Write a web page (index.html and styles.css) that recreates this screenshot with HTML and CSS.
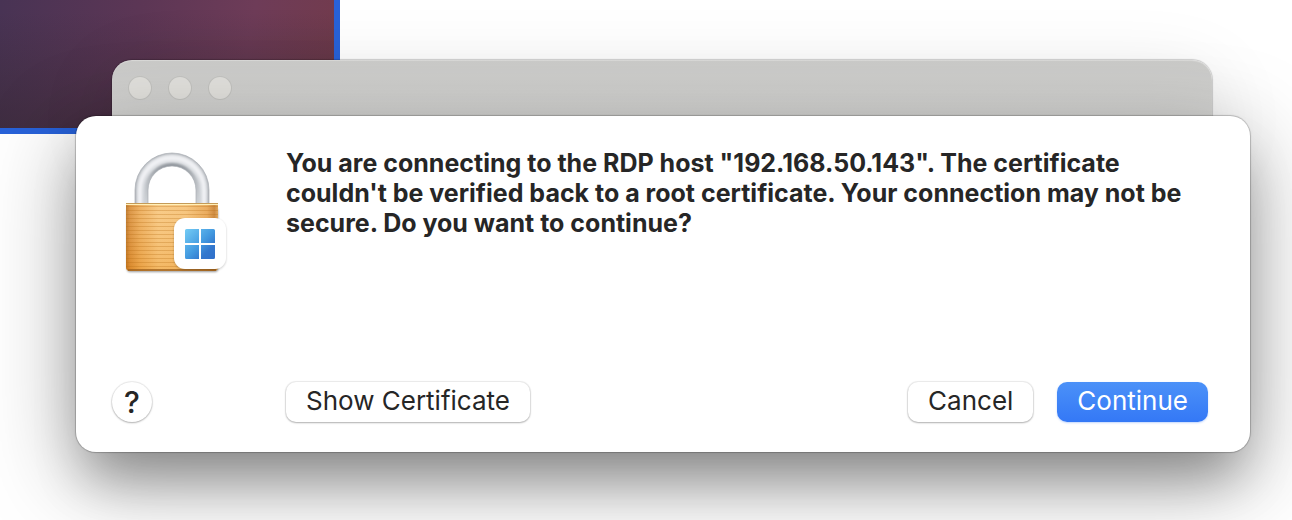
FILE: index.html
```html
<!DOCTYPE html>
<html lang="en">
<head>
<meta charset="utf-8">
<meta name="viewport" content="width=device-width, initial-scale=1">
<title>Certificate warning</title>
<link rel="stylesheet" href="styles.css">
</head>
<body>
<div class="wallpaper"></div>
<main class="desktop">
  <div class="titlebar">
    <span class="light"></span>
    <span class="light"></span>
    <span class="light"></span>
  </div>
  <section class="dialog" role="alertdialog" aria-labelledby="message">
    <div class="content">
      <svg class="lock" width="120" height="130" viewBox="0 0 120 130" aria-hidden="true">
        <defs>
          <linearGradient id="brass" x1="0" y1="0" x2="1" y2="0">
            <stop offset="0" stop-color="#b86f20"/>
            <stop offset=".04" stop-color="#d88c36"/>
            <stop offset=".15" stop-color="#ecaa55"/>
            <stop offset=".35" stop-color="#f8c67c"/>
            <stop offset=".65" stop-color="#f6c174"/>
            <stop offset=".88" stop-color="#e8a450"/>
            <stop offset=".96" stop-color="#c87f30"/>
            <stop offset="1" stop-color="#dca050"/>
          </linearGradient>
          <linearGradient id="shade" x1="0" y1="0" x2="0" y2="1">
            <stop offset="0" stop-color="#fff" stop-opacity=".1"/>
            <stop offset="1" stop-color="#e07c00" stop-opacity=".2"/>
          </linearGradient>
          <pattern id="brush" width="8" height="4" patternUnits="userSpaceOnUse">
            <rect y="2" width="8" height="1" fill="#b86e14" opacity=".3"/>
          </pattern>
          <linearGradient id="steel" x1="0" y1="0" x2="0" y2="1">
            <stop offset="0" stop-color="#e3e5e8"/>
            <stop offset=".5" stop-color="#d6d9dd"/>
            <stop offset="1" stop-color="#d2d5da"/>
          </linearGradient>
          <linearGradient id="inner" gradientUnits="userSpaceOnUse" x1="0" y1="15" x2="0" y2="55">
            <stop offset="0" stop-color="#8c9299"/>
            <stop offset=".4" stop-color="#b4b8bd"/>
            <stop offset="1" stop-color="#ccd0d4"/>
          </linearGradient>
          <linearGradient id="pane" gradientUnits="userSpaceOnUse" x1="69" y1="81" x2="99" y2="111">
            <stop offset="0" stop-color="#74ccf5"/>
            <stop offset=".5" stop-color="#439ae0"/>
            <stop offset=".75" stop-color="#3377cd"/>
            <stop offset="1" stop-color="#306fca"/>
          </linearGradient>
          <filter id="soft" x="-20%" y="-20%" width="140%" height="140%"><feGaussianBlur stdDeviation="1"/></filter>
          <clipPath id="shackle"><path d="M19 55V42a37 37 0 0 1 74 0v13H80V42a24 24 0 0 0-48 0v13z"/></clipPath>
        </defs>
        <rect x="11" y="60" width="91" height="64" rx="3" fill="#000" opacity=".4" filter="url(#soft)"/>
        <g clip-path="url(#shackle)">
          <path d="M19 60V42a37 37 0 0 1 74 0v18H80V42a24 24 0 0 0-48 0v18z" fill="url(#steel)"/>
          <g fill="none" filter="url(#soft)">
            <path d="M32 60V42a24 24 0 0 1 48 0v18" stroke="url(#inner)" stroke-width="6"/>
            <path d="M24 60V42a32 32 0 0 1 64 0v18" stroke="#f0f1f4" stroke-width="4"/>
            <path d="M19 60V42a37 37 0 0 1 74 0v18" stroke="#a4a8ae" stroke-width="2"/>
          </g>
        </g>
        <path d="M19 55V42a37 37 0 0 1 74 0v13M80 55V42a24 24 0 0 0-48 0v13" fill="none" stroke="#a9adb3" stroke-width=".7"/>
        <path d="M10 55h92v64a4 4 0 0 1-4 4H14a4 4 0 0 1-4-4z" fill="url(#brass)"/>
        <path d="M10 55h92v64a4 4 0 0 1-4 4H14a4 4 0 0 1-4-4z" fill="url(#shade)"/>
        <rect x="10" y="57" width="92" height="64" fill="url(#brush)"/>
        <path d="M10 55.5h92" stroke="#c59b58"/>
        <path d="M10 56.5h92" stroke="#fff0b8"/>
        <path d="M12 122h88" stroke="#9d601e" stroke-width="1.5"/>
        <rect x="58" y="71" width="52" height="51" rx="11" fill="#000" opacity=".2" filter="url(#soft)"/>
        <rect x="58" y="70" width="52" height="51" rx="11" fill="#fff"/>
        <path d="M70.500 81H83v14H69V82.500a1.500 1.500 0 0 1 1.500-1.500zM85 81h12.500a1.500 1.500 0 0 1 1.500 1.500V95H85zM69 97h14v14H70.500a1.500 1.500 0 0 1-1.500-1.500zM85 97h14v12.500a1.500 1.500 0 0 1-1.500 1.500H85z" fill="url(#pane)"/>
      </svg>
      <p class="message" id="message">You are connecting to the RDP host "192.168.50.143". The certificate couldn't be verified back to a root certificate. Your connection may not be secure. Do you want to continue?</p>
    </div>
    <div class="actions">
      <button class="button help" type="button" aria-label="Help">?</button>
      <button class="button" type="button">Show Certificate</button>
      <span class="spacer"></span>
      <button class="button" type="button">Cancel</button>
      <button class="button primary" type="button">Continue</button>
    </div>
  </section>
</main>
</body>
</html>
```
FILE: styles.css
```css
* {
  box-sizing: border-box;
}

body {
  margin: 0;
  background: #fff;
  color: #262626;
  font-family: Inter, "Liberation Sans", sans-serif;
  overflow: hidden;
}

.wallpaper {
  position: absolute;
  top: 0;
  left: 0;
  width: 340px;
  height: 134px;
  border: solid #2862d9;
  border-width: 0 6px 6px 0;
  background:
    linear-gradient(to bottom, rgba(50, 38, 45, 0) 10%, rgba(50, 38, 45, 0.5) 100%),
    linear-gradient(100deg, #483354 0%, #5c3655 40%, #6e3c58 72%, #733b4c 100%);
}

.desktop {
  position: relative;
  padding: 60px 42px 68px 76px;
}

.titlebar {
  display: flex;
  gap: 18px;
  height: 76px;
  margin: 0 38px -20px 36px;
  padding: 17px;
  border-radius: 20px 20px 0 0;
  background: linear-gradient(#cbcbc9, #d4d4d2 56px);
  box-shadow:
    0 0 1px 1px rgba(0, 0, 0, 0.18),
    inset 0 1px 1px rgba(255, 255, 255, 0.3),
    0 20px 80px rgba(0, 0, 0, 0.12);
}

.light {
  width: 22px;
  height: 22px;
  border-radius: 50%;
  background: #e2e1dd;
  box-shadow: 0 0 0 1px #c3c3c0;
}

.dialog {
  position: relative;
  padding: 32px 42px 30px 36px;
  border-radius: 20px;
  background: #fff;
  box-shadow:
    0 0 1px 1px rgba(0, 0, 0, 0.22),
    0 36px 50px -10px rgba(0, 0, 0, 0.25),
    0 24px 90px rgba(0, 0, 0, 0.36);
}

.content {
  display: flex;
  gap: 50px;
  min-height: 234px;
}

.lock {
  flex: none;
  margin-left: 4px;
}

.message {
  margin: 0;
  font-size: 25px;
  font-weight: 700;
  line-height: 30px;
}

.actions {
  display: flex;
  align-items: center;
  gap: 24px;
}

.button {
  height: 40px;
  padding: 0 20px 2px;
  border: 0;
  border-radius: 10px;
  background: #fff;
  color: inherit;
  box-shadow:
    0 0 1px 1px rgba(0, 0, 0, 0.08),
    0 1px 2px rgba(0, 0, 0, 0.25);
  font: 400 26px/38px Inter, "Liberation Sans", sans-serif;
}

.help {
  width: 40px;
  margin-right: 110px;
  padding: 0;
  border-radius: 50%;
  font-size: 30px;
  font-weight: 500;
}

.spacer {
  flex: 1;
}

.primary {
  background: linear-gradient(#4b91f8, #3478f6);
  color: #fff;
  box-shadow: 0 1px 2px rgba(52, 120, 246, 0.3);
}
```
